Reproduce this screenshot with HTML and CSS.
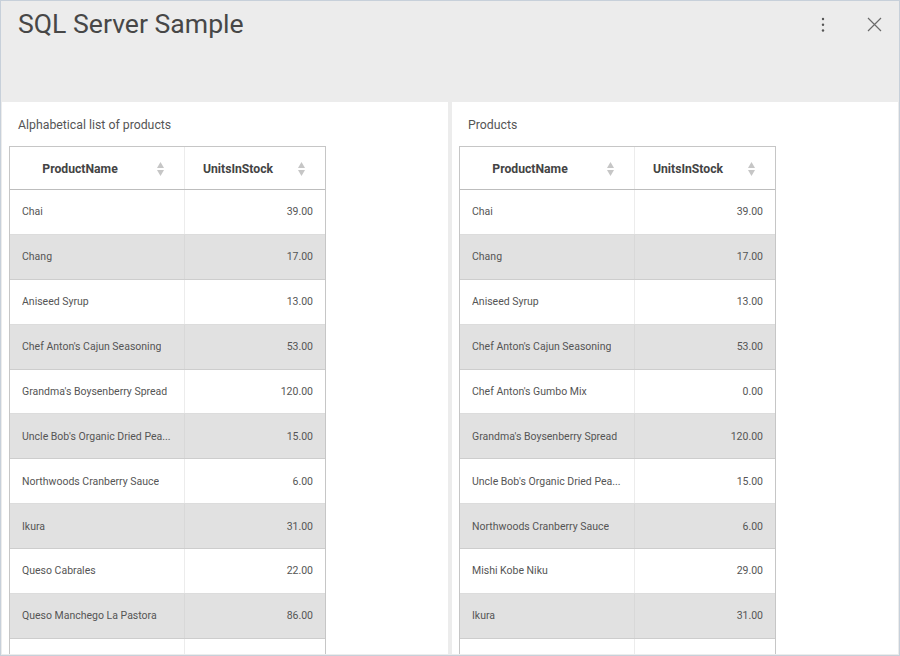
FILE: index.html
```html
<!DOCTYPE html>
<html lang="en">
<head>
<meta charset="utf-8">
<title>SQL Server Sample</title>
<link rel="stylesheet" href="styles.css">
</head>
<body>
<div class="window">
  <header class="header">
    <h1 class="title">SQL Server Sample</h1>
    <div class="actions">
      <button class="icon-btn kebab" aria-label="More">
        <svg width="6" height="16" viewBox="0 0 6 16"><circle cx="3" cy="2" r="1.2"/><circle cx="3" cy="7.8" r="1.2"/><circle cx="3" cy="13.5" r="1.2"/></svg>
      </button>
      <button class="icon-btn close" aria-label="Close">
        <svg width="15" height="15" viewBox="0 0 15 15"><path d="M1 1 L14 14 M14 1 L1 14"/></svg>
      </button>
    </div>
  </header>
  <main class="panels">
    <section class="panel">
      <h2 class="panel-title">Alphabetical list of products</h2>
      <div class="grid">
        <div class="row head">
          <div class="cell c1"><span class="label">ProductName</span><svg class="sort" width="7" height="14" viewBox="0 0 7 14"><polygon points="3.5,0 7,6 0,6"/><polygon points="0,8 7,8 3.5,14"/></svg></div>
          <div class="cell c2"><span class="label">UnitsInStock</span><svg class="sort" width="7" height="14" viewBox="0 0 7 14"><polygon points="3.5,0 7,6 0,6"/><polygon points="0,8 7,8 3.5,14"/></svg></div>
        </div>
        <div class="row"><div class="cell c1"><span class="txt">Chai</span></div><div class="cell c2 num">39.00</div></div>
        <div class="row alt"><div class="cell c1"><span class="txt">Chang</span></div><div class="cell c2 num">17.00</div></div>
        <div class="row"><div class="cell c1"><span class="txt">Aniseed Syrup</span></div><div class="cell c2 num">13.00</div></div>
        <div class="row alt"><div class="cell c1"><span class="txt">Chef Anton's Cajun Seasoning</span></div><div class="cell c2 num">53.00</div></div>
        <div class="row"><div class="cell c1"><span class="txt">Grandma's Boysenberry Spread</span></div><div class="cell c2 num">120.00</div></div>
        <div class="row alt"><div class="cell c1"><span class="txt" title="Uncle Bob's Organic Dried Pears">Uncle Bob's Organic Dried Pea...</span></div><div class="cell c2 num">15.00</div></div>
        <div class="row"><div class="cell c1"><span class="txt">Northwoods Cranberry Sauce</span></div><div class="cell c2 num">6.00</div></div>
        <div class="row alt"><div class="cell c1"><span class="txt">Ikura</span></div><div class="cell c2 num">31.00</div></div>
        <div class="row"><div class="cell c1"><span class="txt">Queso Cabrales</span></div><div class="cell c2 num">22.00</div></div>
        <div class="row alt"><div class="cell c1"><span class="txt">Queso Manchego La Pastora</span></div><div class="cell c2 num">86.00</div></div>
        <div class="row"><div class="cell c1"></div><div class="cell c2 num"></div></div>
      </div>
    </section>
    <section class="panel">
      <h2 class="panel-title">Products</h2>
      <div class="grid">
        <div class="row head">
          <div class="cell c1"><span class="label">ProductName</span><svg class="sort" width="7" height="14" viewBox="0 0 7 14"><polygon points="3.5,0 7,6 0,6"/><polygon points="0,8 7,8 3.5,14"/></svg></div>
          <div class="cell c2"><span class="label">UnitsInStock</span><svg class="sort" width="7" height="14" viewBox="0 0 7 14"><polygon points="3.5,0 7,6 0,6"/><polygon points="0,8 7,8 3.5,14"/></svg></div>
        </div>
        <div class="row"><div class="cell c1"><span class="txt">Chai</span></div><div class="cell c2 num">39.00</div></div>
        <div class="row alt"><div class="cell c1"><span class="txt">Chang</span></div><div class="cell c2 num">17.00</div></div>
        <div class="row"><div class="cell c1"><span class="txt">Aniseed Syrup</span></div><div class="cell c2 num">13.00</div></div>
        <div class="row alt"><div class="cell c1"><span class="txt">Chef Anton's Cajun Seasoning</span></div><div class="cell c2 num">53.00</div></div>
        <div class="row"><div class="cell c1"><span class="txt">Chef Anton's Gumbo Mix</span></div><div class="cell c2 num">0.00</div></div>
        <div class="row alt"><div class="cell c1"><span class="txt">Grandma's Boysenberry Spread</span></div><div class="cell c2 num">120.00</div></div>
        <div class="row"><div class="cell c1"><span class="txt" title="Uncle Bob's Organic Dried Pears">Uncle Bob's Organic Dried Pea...</span></div><div class="cell c2 num">15.00</div></div>
        <div class="row alt"><div class="cell c1"><span class="txt">Northwoods Cranberry Sauce</span></div><div class="cell c2 num">6.00</div></div>
        <div class="row"><div class="cell c1"><span class="txt">Mishi Kobe Niku</span></div><div class="cell c2 num">29.00</div></div>
        <div class="row alt"><div class="cell c1"><span class="txt">Ikura</span></div><div class="cell c2 num">31.00</div></div>
        <div class="row"><div class="cell c1"></div><div class="cell c2 num"></div></div>
      </div>
    </section>
  </main>
</div>
</body>
</html>
```

FILE: styles.css
```css
* { box-sizing: border-box; }

html, body {
  margin: 0;
  padding: 0;
  background: #ececec;
}

body {
  font-family: Roboto, "Liberation Sans", Arial, sans-serif;
  color: #555;
}

.window {
  width: 900px;
  height: 656px;
  border: 1px solid #c7d0da;
  background: #ececec;
  display: flex;
  flex-direction: column;
  overflow: hidden;
}

.header {
  height: 101px;
  flex: none;
  display: flex;
  align-items: flex-start;
  padding: 8px 17px 0 17px;
}

.title {
  margin: 0;
  font-size: 26.6px;
  line-height: 30px;
  font-weight: 400;
  color: #474747;
}

.actions {
  margin-left: auto;
  display: flex;
  align-items: flex-start;
  gap: 41px;
  padding-top: 8px;
}

.icon-btn {
  border: 0;
  padding: 0;
  margin: 0;
  background: none;
  display: block;
  line-height: 0;
}

.kebab svg { fill: #555; }

.close svg path {
  stroke: #6a6a6a;
  stroke-width: 1.2;
  fill: none;
}

.panels {
  flex: 1;
  min-height: 0;
  display: flex;
  gap: 4px;
  padding: 0 1px 1px 1px;
}

.panel {
  flex: 1;
  background: #fff;
  padding: 15px 7px 0 7px;
  overflow: hidden;
  min-width: 0;
}

.panel-title {
  margin: 0 0 13px 9px;
  font-size: 12.3px;
  line-height: 16px;
  font-weight: 400;
  color: #555;
}

.grid {
  width: 317px;
  border: 1px solid #c6c6c6;
  border-bottom: 0;
}

.row {
  display: flex;
  height: 44.875px;
  border-bottom: 1px solid #dcdcdc;
  background: #fff;
}

.row.alt {
  background: #e1e1e1;
  border-bottom-color: #cdcdcd;
}

.row.head {
  height: 43px;
  border-bottom: 1px solid #bdbdbd;
}

.cell {
  display: flex;
  align-items: center;
  padding: 0 12px;
  font-size: 10.5px;
  color: #555;
  min-width: 0;
}

.cell.c1 {
  width: 175px;
  flex: none;
  border-right: 1px solid #ececec;
}

.row.alt .cell.c1 { border-right-color: #d8d8d8; }

.cell.c2 {
  flex: 1;
}

.cell.num {
  justify-content: flex-end;
}

.txt {
  white-space: nowrap;
  overflow: hidden;
  text-overflow: ellipsis;
}

.head .cell {
  padding: 1px 20px 0 0;
}

.head .label {
  flex: 1;
  text-align: center;
  font-size: 12.2px;
  font-weight: 700;
  color: #444;
}

.sort {
  flex: none;
  margin-left: 7px;
  fill: #c6c6c6;
}
```
